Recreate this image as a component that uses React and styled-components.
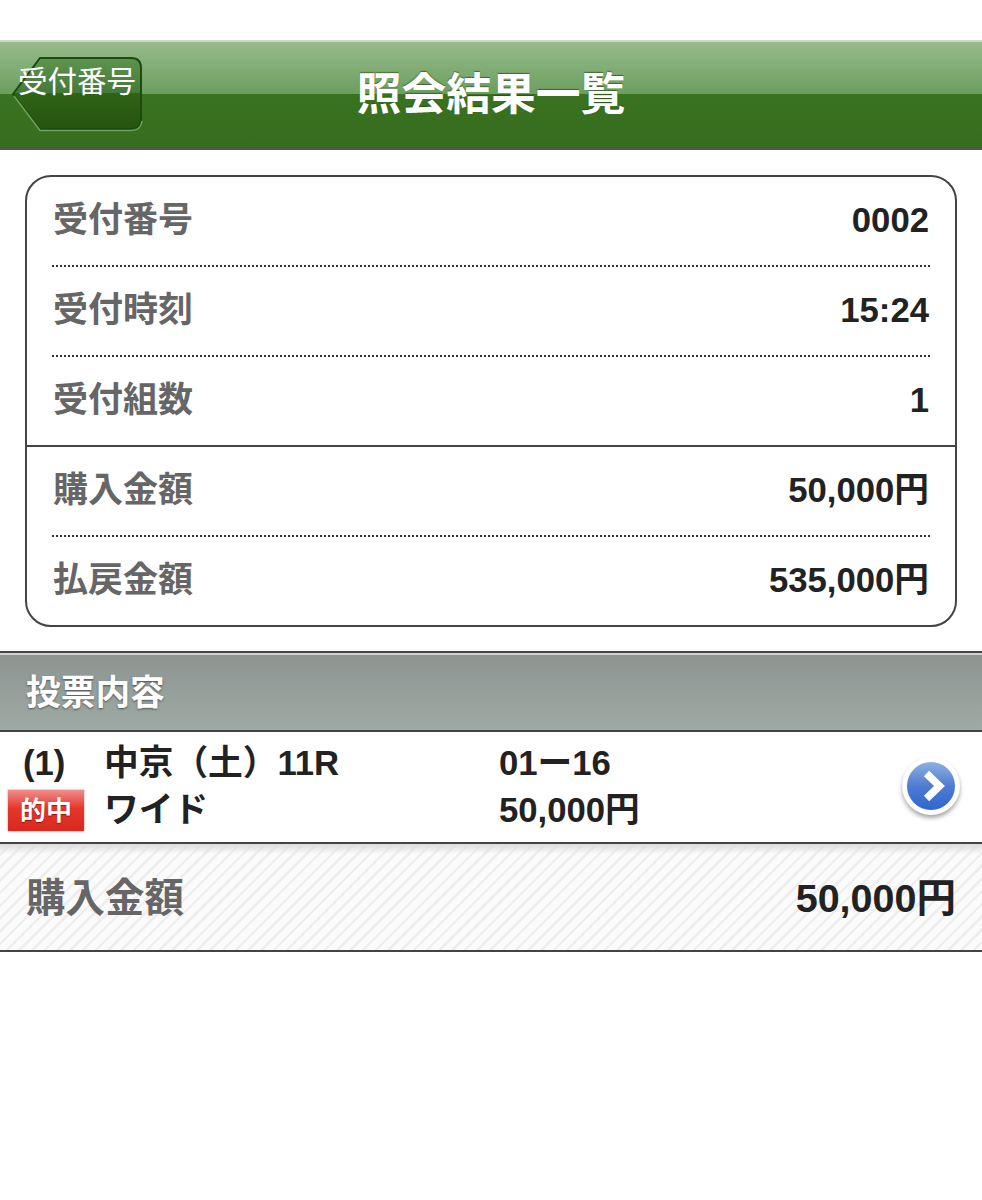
import React from 'react';
import styled, { createGlobalStyle } from 'styled-components';

const FONT = `"Liberation Sans", "Noto Sans CJK JP", sans-serif`;

const GlobalStyle = createGlobalStyle`
  html, body {
    margin: 0;
    padding: 0;
    background: #fff;
    font-family: ${FONT};
  }
`;

const Page = styled.div`
  width: 982px;
  height: 1200px;
  padding-top: 40px;
  box-sizing: border-box;
  background: #fff;
  overflow: hidden;
`;

const Header = styled.header`
  display: grid;
  grid-template-columns: 1fr auto 1fr;
  align-items: center;
  height: 110px;
  box-sizing: border-box;
  border-top: 2px solid #c9dcc3;
  border-bottom: 2px solid #4a5a46;
  background: linear-gradient(
    to bottom,
    #97bb8a 0%,
    #6b9e5e 49.500%,
    #3a731f 49.500%,
    #366c20 100%
  );
`;

const BackButton = styled.div`
  position: relative;
  justify-self: start;
  width: 132px;
  height: 77px;
  margin-left: 11px;
  margin-top: -3px;
`;

const BackShape = styled.svg`
  display: block;
  width: 132px;
  height: 77px;
`;

const BackLabel = styled.span`
  position: absolute;
  left: 7px;
  top: 7px;
  font-size: 29.500px;
  line-height: 40px;
  color: #fff;
  white-space: nowrap;
`;

const Title = styled.h1`
  margin: -2px 0 0;
  font-size: 44.800px;
  line-height: 60px;
  font-weight: 700;
  color: #fff;
  text-shadow: 0 -1px 1px rgba(30, 60, 20, 0.6);
`;

const Card = styled.section`
  margin: 25px 25px 24px;
  border: 2px solid #444;
  border-radius: 26px;
  background: #fff;
`;

const Row = styled.div`
  display: flex;
  justify-content: space-between;
  align-items: center;
  height: ${(p) => (p.$last ? 88 : 90)}px;
  box-sizing: border-box;
  margin: 0 ${(p) => (p.$solid ? 0 : 25)}px;
  padding: 0 ${(p) => (p.$solid ? 25 : 0)}px;
  border-bottom: ${(p) =>
    p.$last ? 'none' : p.$solid ? '2px solid #444' : '2px dotted #333'};
`;

const Label = styled.span`
  margin: 0 0 2px 1px;
  font-size: 35px;
  line-height: 40px;
  font-weight: 700;
  color: #666;
`;

const Value = styled.span`
  margin: 0 1px 2px 0;
  font-size: 34.700px;
  line-height: 40px;
  font-weight: 700;
  color: #222;
`;

const SectionBar = styled.h2`
  display: flex;
  align-items: center;
  height: 81px;
  box-sizing: border-box;
  margin: 0;
  padding: 0 26px 4px;
  border-top: 2px solid #444;
  border-bottom: 2px solid #444;
  box-shadow: inset 0 2px 0 #cfd4d0;
  background: linear-gradient(to bottom, #8c9490, #9eaaa5);
  font-size: 34.700px;
  font-weight: 700;
  color: #fff;
  text-shadow: 0 1px 2px rgba(50, 50, 50, 0.7);
`;

const Ticket = styled.div`
  display: grid;
  grid-template-columns: 104px 395px 1fr auto;
  grid-template-rows: 47px 47px;
  align-items: center;
  height: 112px;
  box-sizing: border-box;
  padding: 7px 22px 0 0;
  border-bottom: 2px solid #444;
  font-size: 34.700px;
  line-height: 40px;
  font-weight: 700;
  color: #222;
`;

const Num = styled.span`
  padding-left: 23px;
`;

const HitBadge = styled.span`
  justify-self: start;
  display: flex;
  align-items: center;
  justify-content: center;
  width: 76px;
  height: 41px;
  margin-left: 8px;
  margin-top: 2px;
  background: linear-gradient(to bottom, #ee8f8a 0%, #e6352b 45%, #d92a20 100%);
  box-shadow: 0 0 2px rgba(120, 0, 0, 0.5);
  font-size: 26px;
  color: #fff;
  text-shadow: 0 1px 1px rgba(120, 0, 0, 0.7);
`;

const ArrowCell = styled.div`
  grid-column: 4;
  grid-row: 1 / span 2;
  filter: drop-shadow(0 3px 2px rgba(0, 0, 0, 0.35));
  line-height: 0;
`;

const Total = styled.div`
  display: flex;
  justify-content: space-between;
  align-items: center;
  height: 108px;
  box-sizing: border-box;
  padding: 2px 26px 0;
  border-bottom: 2px solid #444;
  background: linear-gradient(to bottom, #dcdcdc, rgba(248, 248, 248, 0) 10px),
    repeating-linear-gradient(
      135deg,
      #fbfbfb 0,
      #fbfbfb 6.500px,
      #eeeeee 6.500px,
      #eeeeee 9px
    );
`;

const TotalLabel = styled.span`
  font-size: 39.500px;
  line-height: 46px;
  font-weight: 700;
  color: #666;
`;

const TotalValue = styled.span`
  font-size: 39.500px;
  line-height: 46px;
  font-weight: 700;
  color: #222;
`;

const summary = [
  { label: '受付番号', value: '0002' },
  { label: '受付時刻', value: '15:24' },
  { label: '受付組数', value: '1', solid: true },
  { label: '購入金額', value: '50,000円' },
  { label: '払戻金額', value: '535,000円', last: true },
];

const BackIcon = () => (
  <BackShape viewBox="0 0 132 77">
    <defs>
      <linearGradient id="backFill" x1="0" y1="0" x2="0" y2="1">
        <stop offset="0" stopColor="#5f9450" />
        <stop offset="0.49" stopColor="#44793a" />
        <stop offset="0.5" stopColor="#2f6316" />
        <stop offset="1" stopColor="#26540f" />
      </linearGradient>
    </defs>
    <path
      d="M2 39 L29 3 H120 Q130 3 130 13 V64 Q130 74 120 74 H29 Z"
      fill="url(#backFill)"
      stroke="#1d4a10"
      strokeWidth="2"
    />
    <path d="M3 41 L29 75.500 H120 Q130 75.500 131 66" fill="none" stroke="#6fa25d" strokeWidth="1.500" />
  </BackShape>
);

const NextIcon = () => (
  <svg width="58" height="58" viewBox="0 0 58 58">
    <defs>
      <linearGradient id="nextFill" x1="0" y1="0" x2="0" y2="1">
        <stop offset="0" stopColor="#8fb0e2" />
        <stop offset="0.5" stopColor="#4f7cd2" />
        <stop offset="1" stopColor="#2f66d2" />
      </linearGradient>
    </defs>
    <circle cx="29" cy="29" r="29" fill="#fff" />
    <circle cx="29" cy="29" r="24" fill="url(#nextFill)" />
    <path d="M24.500 16.500 L37.500 29 L24.500 41.500" fill="none" stroke="#fff" strokeWidth="7.500" />
  </svg>
);

export default function App() {
  return (
    <>
      <GlobalStyle />
      <Page>
        <Header>
          <BackButton>
            <BackIcon />
            <BackLabel>受付番号</BackLabel>
          </BackButton>
          <Title>照会結果一覧</Title>
        </Header>
        <Card>
          {summary.map((row) => (
            <Row key={row.label} $solid={row.solid} $last={row.last}>
              <Label>{row.label}</Label>
              <Value>{row.value}</Value>
            </Row>
          ))}
        </Card>
        <SectionBar>投票内容</SectionBar>
        <Ticket>
          <Num>(1)</Num>
          <span>中京（土）11R</span>
          <span>01ー16</span>
          <ArrowCell>
            <NextIcon />
          </ArrowCell>
          <HitBadge>的中</HitBadge>
          <span>ワイド</span>
          <span>50,000円</span>
        </Ticket>
        <Total>
          <TotalLabel>購入金額</TotalLabel>
          <TotalValue>50,000円</TotalValue>
        </Total>
      </Page>
    </>
  );
}
